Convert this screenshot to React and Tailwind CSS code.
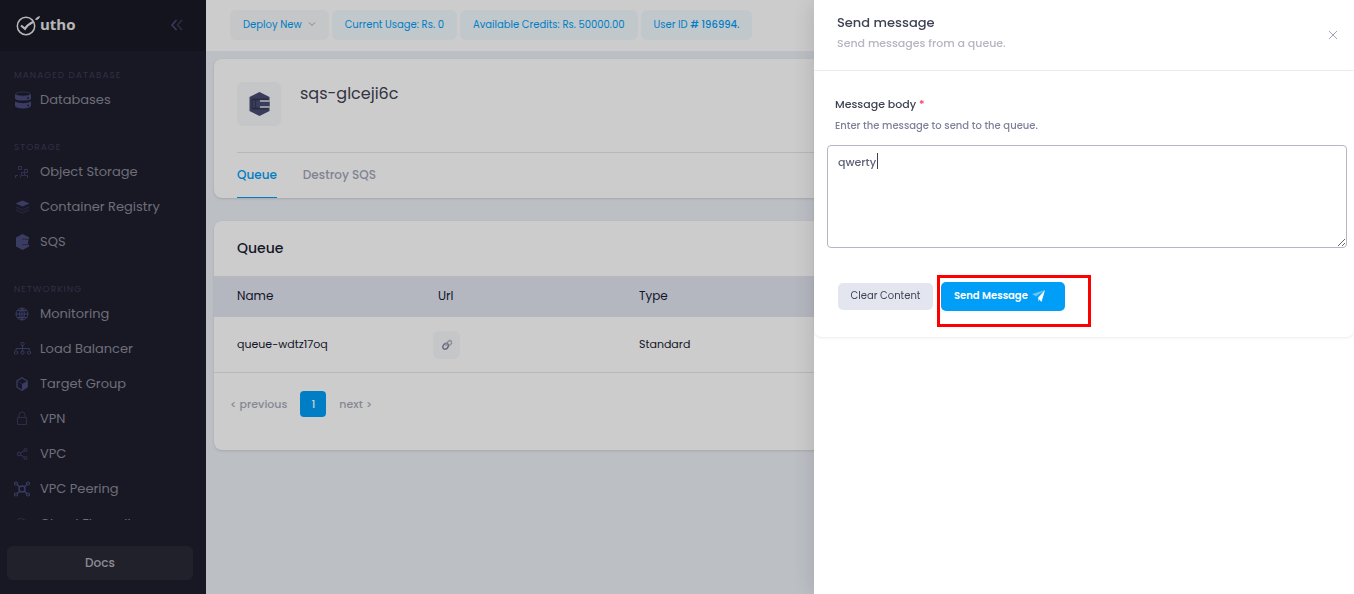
import { useState } from 'react';

function Svg({ size, children, className = '' }) {
  return (
    <svg width={size} height={size} viewBox={`0 0 ${size} ${size}`} fill="none" stroke="currentColor" className={className} aria-hidden="true">
      {children}
    </svg>
  );
}

const icons = {
  databases: (
    <Svg size={18}>
      <g fill="currentColor" stroke="none">
        <path d="M1 3.400Q9 7 17 3.400V7.600Q17 9 15 9.200L9 9.500Q1 9.500 1 7.200Z" />
        <path d="M1 10.500Q4 12.300 9 12.300T17 10.500V14.800Q16 17.500 9 17.500T1 14.800Z" />
        <circle cx="14" cy="7" r="0.900" fill="#1e1e2d" />
        <circle cx="14" cy="14.500" r="0.900" fill="#1e1e2d" />
      </g>
      <ellipse cx="9" cy="3" rx="7.500" ry="2" opacity="0.6" />
    </Svg>
  ),
  object: (
    <Svg size={18} className="opacity-75">
      <path d="M4.500 3.500h3v3h-3zM10.500 6.500h3v3h-3zM7.500 9.500h3v3h-3zM1.500 15v-2.500h2.500M6.500 14.500v-2M11 12.500h2.500V15" />
    </Svg>
  ),
  registry: (
    <Svg size={18}>
      <path d="M8.500 2.500 15.500 5.500 8.500 8.500 1.500 5.500z" fill="currentColor" stroke="none" />
      <path d="m2 9 6.500 3L15 9M2 12l6.500 3 6.500-3" opacity="0.35" strokeWidth="1.500" />
    </Svg>
  ),
  sqs: (
    <Svg size={18}>
      <path d="M8.500 1 15 4.300V7l-1 1v2.500l1 1V13.500L8.500 17 2 13.500V4.500z" fill="currentColor" stroke="none" />
      <path d="m8 6 7 .500M8 11.800l7-.500" stroke="#1e1e2d" strokeWidth="0.600" />
    </Svg>
  ),
  monitoring: (
    <Svg size={18}>
      <circle cx="8" cy="9" r="6" />
      <path d="M2 9h12M8 3v12M3.500 5.500h9M3.500 12.500h9M8 3q-5 6 0 12M8 3q5 6 0 12" />
    </Svg>
  ),
  balancer: (
    <Svg size={18} className="opacity-90">
      <rect x="7" y="2.500" width="3" height="3" rx="1" />
      <path d="M8.500 5.500V11M2 10V8.500h13.500V10" />
      <rect x="0.500" y="11" width="3" height="3" rx="1" />
      <rect x="7" y="11" width="3" height="3" rx="1" />
      <rect x="13.500" y="11" width="3" height="3" rx="1" />
    </Svg>
  ),
  target: (
    <Svg size={18}>
      <path d="M8 2.800 13 5.800v6.400l-5 3-5-3V5.800z" strokeWidth="1.300" />
      <path d="M8 9 13.500 6v6.200l-5.500 3z" fill="currentColor" stroke="none" />
      <path d="M3 6l5 3" opacity="0.4" />
    </Svg>
  ),
  vpn: (
    <Svg size={18} className="opacity-60">
      <path d="M3.500 7.500h9v7h-9zM5 7.500V5q0-3 3-3t3 3v2.500" />
    </Svg>
  ),
  vpc: (
    <Svg size={18} className="opacity-80">
      <circle cx="5" cy="9" r="1.800" />
      <circle cx="11.500" cy="5" r="1.500" />
      <circle cx="11.500" cy="13" r="1.500" />
      <path d="m6.500 8 3.800-2.200M6.500 10l3.800 2.200" />
    </Svg>
  ),
  peering: (
    <Svg size={18}>
      <circle cx="8" cy="9" r="3" strokeWidth="1.400" />
      <circle cx="2" cy="3.500" r="1.500" strokeWidth="1.200" />
      <circle cx="14" cy="3.500" r="1.500" strokeWidth="1.200" />
      <circle cx="2" cy="14.500" r="1.500" strokeWidth="1.200" />
      <circle cx="14" cy="14.500" r="1.500" strokeWidth="1.200" />
      <path d="m3.500 5 2.300 2m4.400 4 2.300 2.300m0-8.300-2.300 2m-4.400 4-2.300 2.300" strokeWidth="1.500" />
    </Svg>
  ),
  firewall: (
    <Svg size={18} className="opacity-60">
      <path d="M4 4.500q2-2 5-.500l5 3v6H4z" />
    </Svg>
  ),
};

const sections = [
  { title: 'Managed Database', items: [['Databases', 'databases']] },
  {
    title: 'Storage',
    items: [['Object Storage', 'object'], ['Container Registry', 'registry'], ['SQS', 'sqs']],
  },
  {
    title: 'Networking',
    items: [
      ['Monitoring', 'monitoring'],
      ['Load Balancer', 'balancer'],
      ['Target Group', 'target'],
      ['VPN', 'vpn'],
      ['VPC', 'vpc'],
      ['VPC Peering', 'peering'],
      ['Cloud Firewall', 'firewall'],
    ],
  },
];

function Logo() {
  return (
    <a href="#home" aria-label="utho" className="flex items-center text-[#e6e6e6]">
      <svg width="24" height="22" viewBox="0 0 24 22" fill="none" stroke="currentColor" aria-hidden="true">
        <circle cx="10" cy="11" r="8.700" strokeWidth="1.500" />
        <path d="M5 10.500 9 13.800Q11.500 9.500 17 7" strokeWidth="2.200" />
        <path d="M19.500 4.500q.500-2 4-3-.500 2-1.500 2.500-1 .700-2.500.500Z" fill="currentColor" strokeWidth="0.800" />
      </svg>
      <span className="pb-1 font-['Open_Sans',sans-serif] text-[15px] leading-5 font-bold">utho</span>
    </a>
  );
}

function Sidebar() {
  return (
    <aside className="sticky top-0 flex h-screen w-[206px] shrink-0 flex-col bg-[#1e1e2d]">
      <div className="flex h-[51px] shrink-0 items-center justify-between bg-[#1a1a27] pr-[22px] pl-4">
        <Logo />
        <button type="button" aria-label="Collapse sidebar" className="text-[#494b74]">
          <svg width="14" height="14" viewBox="0 0 14 14" fill="none" stroke="currentColor" strokeWidth="1.500" aria-hidden="true">
            <path d="M6.500 1 2 6l4.500 5" />
            <path d="M12 1 7.500 6l4.500 5" opacity="0.600" />
          </svg>
        </button>
      </div>
      <nav className="flex min-h-0 flex-1 flex-col gap-[23px] overflow-hidden pt-[17px] pl-3.5">
        {sections.map((section) => (
          <section key={section.title} className="shrink-0">
            <h2 className="text-[9px] leading-[14px] tracking-[1px] text-[#3c3c5a] uppercase">{section.title}</h2>
            {section.items.map(([label, icon]) => (
              <a key={label} href="#nav" className="flex h-[35px] items-center gap-2 text-[13px] text-[#8a8a98]">
                <span className="text-[#494b7c]">{icons[icon]}</span>
                {label}
              </a>
            ))}
          </section>
        ))}
      </nav>
      <div className="shrink-0 pt-[26px] pr-[13px] pb-3.5 pl-[7px]">
        <button type="button" className="h-[34px] w-full rounded-md bg-[#2a2a38] text-[12px] font-medium text-[#b0b0b8]">Docs</button>
      </div>
    </aside>
  );
}

function Topbar() {
  const chip = 'flex h-[30px] items-center rounded-md bg-[#f1faff] px-[13px] pb-0.5';
  return (
    <header className="flex h-[51px] items-center gap-[3px] bg-white pb-px pl-6 text-[10px] text-[#009ef7]">
      <button type="button" className="flex h-[30px] items-center gap-1.5 rounded-md bg-[#f5f8fa] px-[13px] pb-0.5">
        Deploy New
        <svg width="8" height="6" viewBox="0 0 8 6" fill="none" stroke="#a1a5b7" aria-hidden="true">
          <path d="m1 1.500 3 3 3-3" />
        </svg>
      </button>
      <span className={chip}>Current Usage: Rs. 0</span>
      <span className={chip}>Available Credits: Rs. 50000.00</span>
      <span className={chip}>
        <span>User ID <b className="font-medium"># 196994.</b></span>
      </span>
    </header>
  );
}

function InstanceCard() {
  return (
    <section className="rounded-lg bg-white px-[23px] pt-[23px] shadow-sm">
      <div className="flex h-[70px] items-start gap-[19px]">
        <div className="flex size-11 items-center justify-center rounded-md bg-[#f5f8fa]">
          <svg width="24" height="26" viewBox="0 0 24 26" aria-hidden="true">
            <path d="M12.500 1 22.500 6v14l-10 5-10-5V6z" fill="#494b74" />
            <path d="M12 9h11v2H12zM12 15h11v2H12z" fill="#b9bdc9" />
            <path d="M4.500 7.500h17V9H13l-2 2v4l2 2h8.500v1.500h-17z" fill="#35374f" />
            <path d="M5.500 9.500H8v7H5.500zM9 9.500h4v7H9z" fill="#494b74" />
            <path d="M10 11h12.500v4H10z" fill="#494b74" />
          </svg>
        </div>
        <h1 className="text-[16px] leading-6 text-[#3f4254]">sqs-glceji6c</h1>
      </div>
      <div className="flex h-[46px] gap-[26px] border-t border-[#e4e6ea] text-[12px] font-medium">
        <a href="#queue" className="flex items-center border-b border-[#009ef7] text-[#009ef7]">Queue</a>
        <a href="#destroy" className="flex items-center border-b border-transparent text-[#a1a5b7]">Destroy SQS</a>
      </div>
    </section>
  );
}

function QueueCard() {
  return (
    <section className="overflow-hidden rounded-lg bg-white pb-[33px] shadow-sm">
      <h2 className="px-[23px] pt-[15px] pb-4 text-[14px] leading-6 font-medium text-[#181c32]">Queue</h2>
      <table className="w-full table-fixed text-left text-[#181c32]">
        <thead className="bg-[#e1e5f0] text-[12px]">
          <tr className="h-10 border-y border-[#e4e6ea]">
            <th className="w-[224px] pb-px pl-[23px] font-normal">Name</th>
            <th className="w-[201px] pb-px font-normal">Url</th>
            <th className="pb-px font-normal">Type</th>
          </tr>
        </thead>
        <tbody className="text-[11px]">
          <tr className="h-14 border-b border-[#e4e6ea]">
            <td className="pl-[23px]">queue-wdtz17oq</td>
            <td>
              <button type="button" aria-label="Copy url" className="-ml-[5px] flex h-7 w-[27px] items-center justify-center rounded-md bg-[#f5f8fa]">
                <svg width="12" height="12" viewBox="0 0 12 12" fill="none" strokeWidth="1.500" aria-hidden="true">
                  <path d="M6.500 4.500 4 4.500Q1 7 2 9t4 .500l1-1.500Q8 6 6.500 4.500Z" stroke="#7e8299" />
                  <path d="M5 7Q4.500 5 6 3.500T9 1.500t1.500 3L8 7" stroke="#b5b5c3" />
                </svg>
              </button>
            </td>
            <td>Standard</td>
          </tr>
        </tbody>
      </table>
      <nav aria-label="Pagination" className="mt-[18px] flex items-center gap-[13px] pl-4 text-[11px] font-medium text-[#a8abb9]">
        <button type="button">&lt; previous</button>
        <button type="button" className="size-[26px] rounded bg-[#009ef7] text-white">1</button>
        <button type="button">next &gt;</button>
      </nav>
    </section>
  );
}

function SendDrawer() {
  const [body, setBody] = useState('qwerty');
  return (
    <aside className="fixed inset-y-0 right-0 w-[540px] max-w-full bg-white shadow-[0_0_24px_rgba(0,0,0,0.15)]">
      <header className="flex h-[71px] items-center justify-between border-b border-[#eceef4] pr-4 pl-[23px]">
        <div className="-mt-1">
          <h2 className="text-[13px] leading-5 font-medium text-[#3f4254]">Send message</h2>
          <p className="text-[11px] leading-5 font-medium text-[#b5b5c3]">Send messages from a queue.</p>
        </div>
        <button type="button" aria-label="Close">
          <svg width="10" height="10" viewBox="0 0 10 10" fill="none" stroke="#a1a5b7" aria-hidden="true">
            <path d="m1 1 8 8M9 1 1 9" />
          </svg>
        </button>
      </header>
      <form className="rounded-lg px-[7px] pt-[22px] pb-[26px] pl-[13px] shadow-[0_1px_3px_rgba(0,0,0,0.08)]">
        <div className="pl-2">
          <label htmlFor="message" className="block text-[11px] leading-[22px] font-medium text-[#3f4254]">
            Message body <span className="text-[#f1416c]">*</span>
          </label>
          <p className="text-[10px] leading-[22px] font-medium text-[#7e8299]">Enter the message to send to the queue.</p>
        </div>
        <div className="relative mt-2">
          <textarea
            id="message"
            value={body}
            onChange={(e) => setBody(e.target.value)}
            className="block h-[103px] w-full resize rounded border border-[#b5b5c3] bg-white px-2.5 py-1.5 text-[11px] leading-5 font-medium text-[#5e6278] outline-none"
          />
          <span className="absolute top-2 left-[50px] h-4 w-px bg-[#3f4254]" />
        </div>
        <div className="mt-[34px] flex items-center gap-2 pl-[11px]">
          <button type="button" onClick={() => setBody('')} className="h-[27px] w-[95px] rounded-[5px] bg-[#e4e6ef] pb-0.5 text-[10px] text-[#3f4254]">
            Clear Content
          </button>
          <div className="relative">
            <button type="button" className="flex h-[29px] w-[124px] items-center gap-1 rounded-[5px] bg-[#009ef7] pb-[3px] pl-[13px] text-[10px] font-semibold text-white">
              Send Message
              <svg width="14" height="14" viewBox="0 0 14 14" fill="white" className="mt-0.5" aria-hidden="true">
                <path d="M13 1 9.500 13 6.500 9.500z" />
                <path d="M13 1 0 5l4 2.500z" opacity="0.400" />
                <path d="m13 1-7 7.500.500 4z" opacity="0.800" />
              </svg>
            </button>
            <span className="pointer-events-none absolute -top-[7px] -left-1 h-[52px] w-[154px] border-3 border-[#ff0000]" />
          </div>
        </div>
      </form>
    </aside>
  );
}

export default function App() {
  return (
    <div className="flex min-h-screen bg-[#ebf0f7] font-[Poppins,Inter,sans-serif]">
      <Sidebar />
      <div className="min-w-0 flex-1">
        <Topbar />
        <main className="flex flex-col gap-[23px] p-2">
          <InstanceCard />
          <QueueCard />
        </main>
      </div>
      <div className="fixed inset-0 bg-black/20" />
      <SendDrawer />
    </div>
  );
}
